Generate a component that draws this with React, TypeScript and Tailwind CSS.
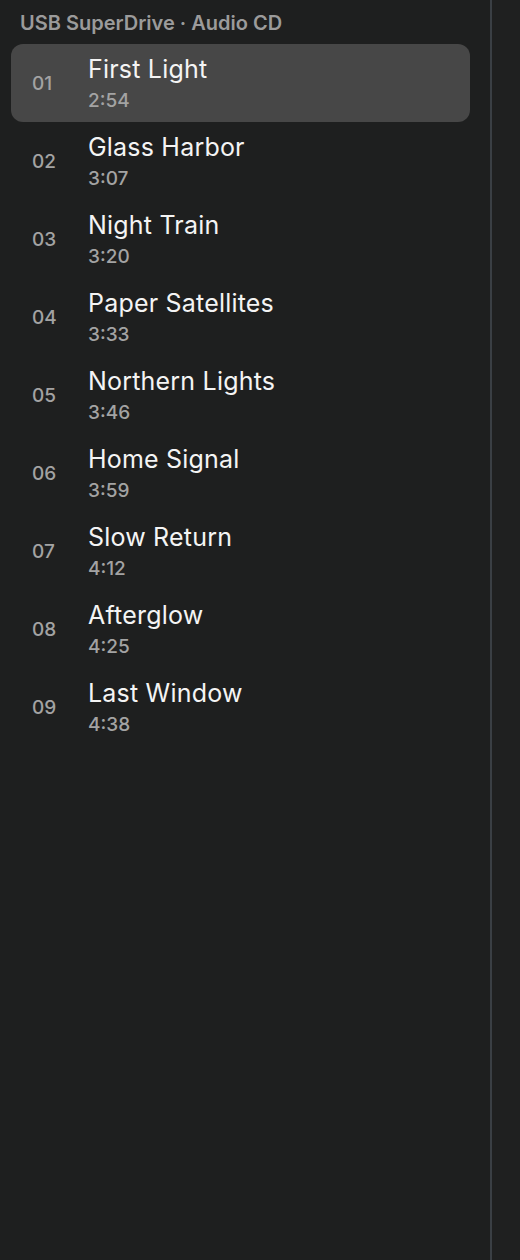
import React from 'react';

interface Track {
  no: string;
  title: string;
  length: string;
}

const tracks: Track[] = [
  { no: '01', title: 'First Light', length: '2:54' },
  { no: '02', title: 'Glass Harbor', length: '3:07' },
  { no: '03', title: 'Night Train', length: '3:20' },
  { no: '04', title: 'Paper Satellites', length: '3:33' },
  { no: '05', title: 'Northern Lights', length: '3:46' },
  { no: '06', title: 'Home Signal', length: '3:59' },
  { no: '07', title: 'Slow Return', length: '4:12' },
  { no: '08', title: 'Afterglow', length: '4:25' },
  { no: '09', title: 'Last Window', length: '4:38' },
];

const TrackRow: React.FC<{ track: Track; active?: boolean }> = ({ track, active }) => (
  <div className={`h-[78px] rounded-xl flex items-center ${active ? 'bg-[#474747]' : ''}`}>
    <span className="pl-[21px] pt-[2px] w-[77px] text-[19px] font-medium text-[#a3a3a3]">{track.no}</span>
    <div className="flex flex-col pt-[1px]">
      <span className="text-[25px] leading-[28px] tracking-[0.2px] text-[#f4f4f4]">{track.title}</span>
      <span className="mt-[7px] text-[19px] leading-[22px] font-medium text-[#a3a3a3]">{track.length}</span>
    </div>
  </div>
);

export default function App() {
  return (
    <div className="w-[520px] h-[1260px] flex bg-[#1e1f1f] font-['Inter',sans-serif] overflow-hidden">
      <div className="w-[490px] flex flex-col pl-[11px] pr-[20px]">
        <div className="h-[44px] flex items-center pl-[9px] pt-[2px] text-[20px] font-semibold text-[#9b9b9b]">
          USB SuperDrive · Audio CD
        </div>
        {tracks.map((t, i) => (
          <TrackRow key={t.no} track={t} active={i === 0} />
        ))}
      </div>
      <div className="w-[2px] bg-[#3a3f44]" />
      <div className="flex-1 bg-[#1f2020]" />
    </div>
  );
}
